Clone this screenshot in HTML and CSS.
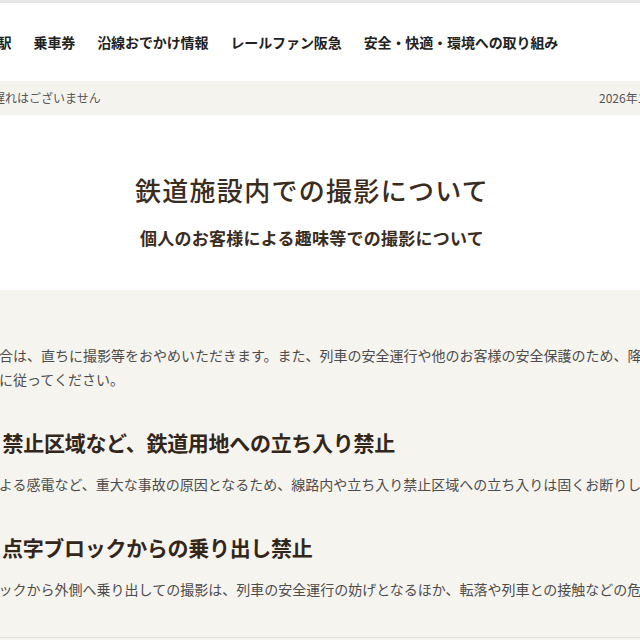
FILE: index.html
```html
<!DOCTYPE html>
<html lang="ja">
<head>
<meta charset="utf-8">
<title>鉄道施設内での撮影について</title>
<link rel="stylesheet" href="styles.css">
</head>
<body>
<header class="band band-nav">
  <nav class="inner nav">
    <a class="nav-item" href="#">運行情報</a>
    <a class="nav-item" href="#">駅</a>
    <a class="nav-item" href="#">乗車券</a>
    <a class="nav-item" href="#">沿線おでかけ情報</a>
    <a class="nav-item" href="#">レールファン阪急</a>
    <a class="nav-item" href="#">安全・快適・環境への取り組み</a>
  </nav>
</header>

<div class="band band-status">
  <div class="inner status">
    <span class="status-text">現在、全線で１５分以上の遅れはございません</span>
    <span class="status-date">2026年1月15日 10時30分現在</span>
  </div>
</div>

<section class="band band-hero">
  <div class="inner hero">
    <h1 class="hero-title">鉄道施設内での撮影について</h1>
    <p class="hero-sub">個人のお客様による趣味等での撮影について</p>
  </div>
</section>

<main class="band band-content">
  <div class="inner content">
    <p class="text">撮影が危険と判断された場合は、直ちに撮影等をおやめいただきます。また、列車の安全運行や他のお客様の安全保護のため、降車時は駅係員や<br>乗務員の案内・放送の指示に従ってください。</p>

    <h2 class="heading">線路内や立ち入り禁止区域など、鉄道用地への立ち入り禁止</h2>
    <p class="text">列車との接触事故や架線による感電など、重大な事故の原因となるため、線路内や立ち入り禁止区域への立ち入りは固くお断りしています。</p>

    <h2 class="heading">駅のホームでは、点字ブロックからの乗り出し禁止</h2>
    <p class="text">ホームの端にある点字ブロックから外側へ乗り出しての撮影は、列車の安全運行の妨げとなるほか、転落や列車との接触などの危険がありますので、おやめください。</p>
  </div>
</main>
</body>
</html>
```

FILE: styles.css
```css
html {
  overflow: hidden;
}

body {
  margin: 0;
  background: #f6f4ef;
  font-family: "Noto Sans CJK JP", "Noto Sans", sans-serif;
  color: #333;
}

.band {
  display: flex;
  justify-content: center;
  padding-right: 16px;
}

.inner {
  flex: none;
  box-sizing: border-box;
}

/* navigation */
.band-nav {
  background: #fff;
  border-top: 3px solid #e6e6e6;
}

.nav {
  width: 1000px;
  display: flex;
  gap: 22px;
  padding: 29px 0 29px 108px;
}

.nav-item {
  font-size: 14px;
  line-height: 20px;
  font-weight: 700;
  letter-spacing: -0.1px;
  color: #222;
  text-decoration: none;
  white-space: nowrap;
}

/* status bar */
.band-status {
  background: #f5f3ee;
}

.status {
  width: 1000px;
  display: flex;
  justify-content: space-between;
  padding: 8px 53px 8px 37px;
  font-size: 12px;
  line-height: 18px;
  color: #555;
  white-space: nowrap;
}

/* hero */
.band-hero {
  background: #fff;
}

.hero {
  width: 1000px;
  text-align: center;
  padding: 57px 0 39px;
  color: #3a2c1e;
}

.hero-title {
  margin: 0;
  font-size: 26px;
  line-height: 36px;
  font-weight: 500;
  letter-spacing: 1.3px;
}

.hero-sub {
  margin: 17px 0 0;
  font-size: 17px;
  line-height: 26px;
  font-weight: 700;
  letter-spacing: 0.25px;
}

/* content */
.band-content {
  background: #f6f4ef;
}

.content {
  width: 962px;
  padding: 53px 0 36px;
  border-bottom: 1px solid #e6e3dc;
}

.text {
  margin: 0;
  font-size: 14px;
  line-height: 24px;
  color: #4d4d4d;
  white-space: nowrap;
}

.heading {
  margin: 36px 0 15px;
  padding-left: 6px;
  font-size: 21px;
  line-height: 30px;
  font-weight: 700;
  letter-spacing: -0.3px;
  color: #33261a;
  white-space: nowrap;
}
```
